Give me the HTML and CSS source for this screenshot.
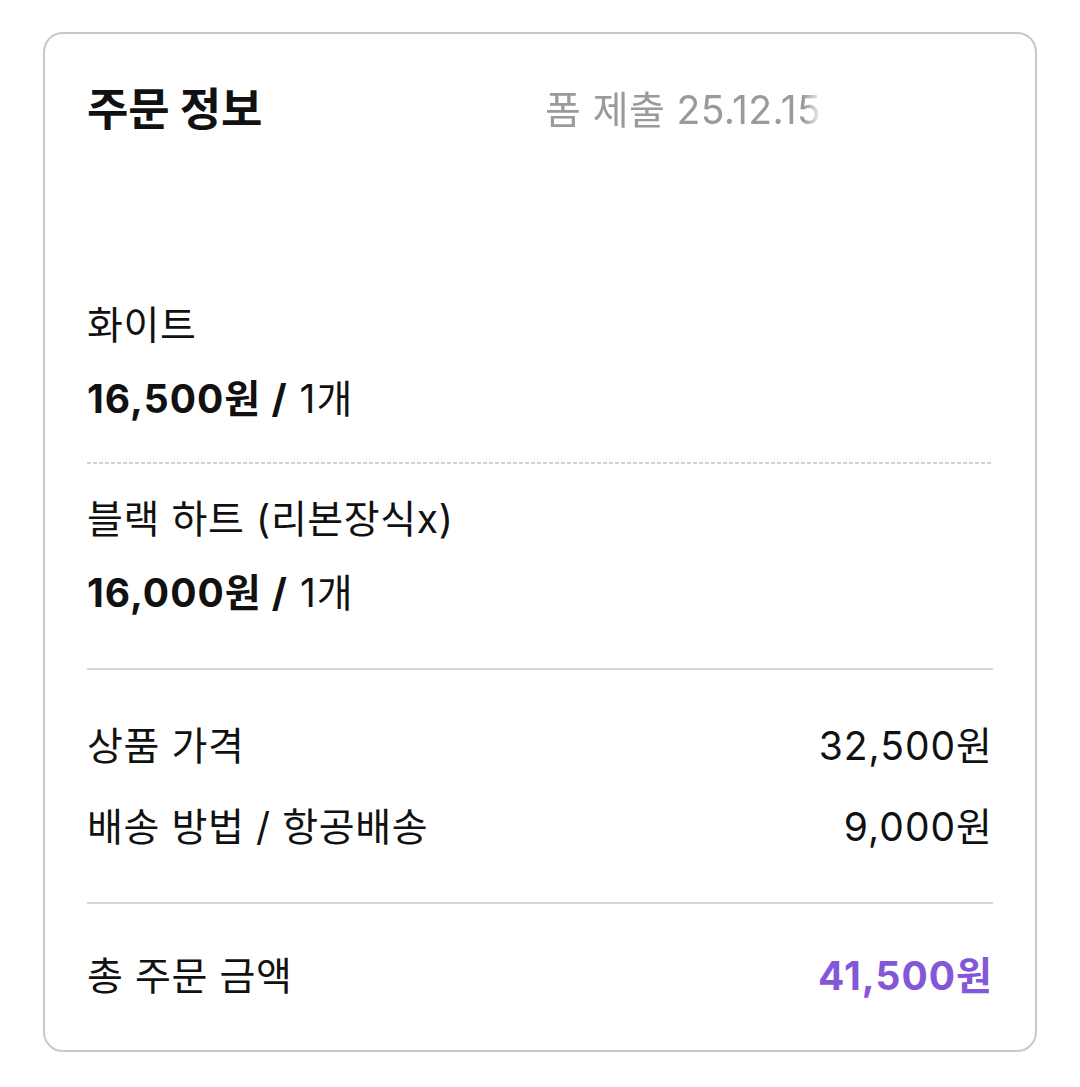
FILE: index.html
```html
<!DOCTYPE html>
<html lang="ko">
<head>
<meta charset="utf-8">
<link rel="stylesheet" href="styles.css">
</head>
<body>
<div class="card">
  <div class="header">
    <div class="title">주문 정보</div>
    <div class="submitted"><span>폼 제출 25.12.15</span></div>
  </div>
  <div class="items">
    <div class="item">
      <div class="name">화이트</div>
      <div class="price"><b>16,500원 /</b> 1개</div>
    </div>
    <div class="dash"></div>
    <div class="item">
      <div class="name">블랙 하트 (리본장식x)</div>
      <div class="price"><b>16,000원 /</b> 1개</div>
    </div>
  </div>
  <div class="line"></div>
  <div class="summary">
    <div class="row"><span>상품 가격</span><span class="num">32,500원</span></div>
    <div class="row"><span>배송 방법 / 항공배송</span><span class="num">9,000원</span></div>
  </div>
  <div class="line"></div>
  <div class="total">
    <span>총 주문 금액</span><span class="num amount">41,500원</span>
  </div>
</div>
</body>
</html>
```

FILE: styles.css
```css
html, body {
  margin: 0;
  padding: 0;
  background: #ffffff;
}
body {
  font-family: "Inter", "Noto Sans CJK KR", sans-serif;
  color: #111111;
}
.card {
  box-sizing: border-box;
  margin: 32px 0 0 43px;
  width: 994px;
  height: 1020px;
  border: 2px solid #c9c9c9;
  border-radius: 20px;
  padding: 0 42px;
}
.header {
  display: flex;
  align-items: center;
  height: 152px;
}
.title {
  font-size: 45px;
  font-weight: 700;
  letter-spacing: -0.2px;
  width: 458px;
  line-height: 56px;
}
.submitted {
  font-size: 39px;
  line-height: 52px;
  letter-spacing: 0.4px;
  color: #9a9a9a;
  width: 278px;
  overflow: hidden;
  white-space: nowrap;
  -webkit-mask-image: linear-gradient(to right, #000 93%, transparent 100%);
}
.items {
  padding-top: 113px;
}
.item {
  display: flex;
  flex-direction: column;
  gap: 22px;
  font-size: 39px;
  line-height: 52px;
  letter-spacing: 0.6px;
}
.price {
  letter-spacing: 1px;
}
.price b {
  font-weight: 700;
}
.dash {
  height: 2px;
  margin: 37px 0 29px;
  background-image: linear-gradient(to right, #d2d2d2 4px, transparent 4px);
  background-size: 6px 2px;
}
.line {
  height: 2px;
  background: #d6d6d6;
}
.items + .line {
  margin-top: 49px;
}
.summary {
  padding: 50px 0 49px;
  display: flex;
  flex-direction: column;
  gap: 29px;
}
.row, .total {
  display: flex;
  justify-content: space-between;
  font-size: 39px;
  line-height: 52px;
  letter-spacing: 0.6px;
}
.num {
  letter-spacing: 1px;
}
.total {
  padding-top: 46px;
}
.amount {
  color: #8457d9;
  font-weight: 700;
}
```
